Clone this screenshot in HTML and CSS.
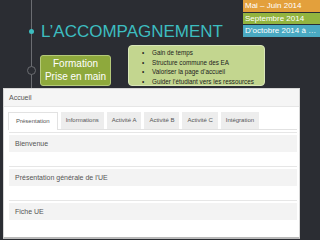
FILE: index.html
```html
<!DOCTYPE html>
<html>
<head>
<title>L'accompagnement</title>
<link rel="stylesheet" href="styles.css">
</head>
<body>

<div class="slide">
  <div class="row row-title">
    <div class="mark"><span class="dot"></span></div>
    <h1>L’ACCOMPAGNEMENT</h1>
    <div class="dates">
      <div class="date orange">Mai – Juin 2014</div>
      <div class="date green">Septembre 2014</div>
      <div class="date teal">D’octobre 2014 à …</div>
    </div>
  </div>

  <div class="row row-steps">
    <div class="mark"><span class="ring"></span></div>
    <div class="step">Formation<br>Prise en main</div>
    <ul class="goals">
      <li>Gain de temps</li>
      <li>Structure commune des EA</li>
      <li>Valoriser la page d’accueil</li>
      <li>Guider l’étudiant vers les ressources</li>
    </ul>
  </div>

  <div class="shot">
    <div class="shot-head">Accueil</div>
    <div class="tabs">
      <div class="tab active">Présentation</div>
      <div class="tab">Informations</div>
      <div class="tab">Activité A</div>
      <div class="tab">Activité B</div>
      <div class="tab">Activité C</div>
      <div class="tab">Intégration</div>
    </div>
    <div class="section"><h3>Bienvenue</h3></div>
    <div class="section"><h3>Présentation générale de l'UE</h3></div>
    <div class="section"><h3>Fiche UE</h3></div>
  </div>
</div>

</body>
</html>
```

FILE: styles.css
```css
body {
  margin: 0;
  background-color: #2b2d33;
  font-family: 'Liberation Sans', Arial, sans-serif;
  overflow: hidden;
}

.slide {
  width: 320px;
  height: 240px;
  /* the timeline rail */
  background: linear-gradient(#6b6d72, #6b6d72) no-repeat 31px 0 / 1px 88px;
}

.row {
  display: flex;
  align-items: flex-start;
}

.row-title {
  height: 45px;
}

.row-steps {
  height: 43px;
}

.mark {
  width: 41px;
  flex-shrink: 0;
}

.dot {
  display: block;
  width: 5px;
  height: 5px;
  margin: 29px 0 0 29px;
  border-radius: 50%;
  background-color: #3dbdc0;
}

.ring {
  display: block;
  width: 7px;
  height: 7px;
  margin: 21px 0 0 27px;
  border: 1px solid #6b6d72;
  border-radius: 50%;
  background-color: #2b2d33;
}

h1 {
  margin: 22px 0 0 0;
  font-size: 17px;
  line-height: 20px;
  font-weight: normal;
  color: #3dbdc0;
  white-space: nowrap;
}

.dates {
  margin-left: auto;
  width: 77px;
  display: flex;
  flex-direction: column;
  gap: 1px;
}

.date {
  height: 12px;
  line-height: 12px;
  padding-left: 2px;
  font-size: 8px;
  color: #fff;
  white-space: nowrap;
  overflow: hidden;
}

.orange { background-color: #e3a03c; }
.green { background-color: #92b43f; height: 11px; line-height: 11px; }
.teal { background-color: #4aa9c2; }

.step {
  width: 69px;
  height: 28px;
  margin-top: 10px;
  margin-left: -1px;
  padding-top: 1px;
  border: 1px solid #b5c97a;
  border-radius: 3px;
  background-color: #8ea93c;
  color: #fff;
  font-size: 10px;
  line-height: 13px;
  text-align: center;
}

.goals {
  width: 133px;
  height: 37px;
  margin: 0 0 0 17px;
  padding: 2px 0 0 2px;
  border: 1px solid #d9e6b8;
  border-radius: 4px;
  background-color: #c3d68f;
  list-style: none;
  font-size: 6.3px;
  line-height: 9.5px;
  color: #1c1c1c;
}

.goals li::before {
  content: '•';
  display: inline-block;
  width: 10px;
  margin-left: 11px;
}

.shot {
  margin-left: 3px;
  width: 295px;
  height: 148px;
  background-color: #fff;
  border: 1px solid #d6d6d6;
  border-bottom: 2px solid #b9b9b9;
  color: #555;
}

.shot-head {
  height: 17px;
  line-height: 18px;
  padding-left: 5px;
  background-color: #f5f5f5;
  border-bottom: 1px solid #e6e6e6;
  font-size: 7px;
}

.tabs {
  display: flex;
  gap: 3px;
  margin: 5px 2px 0 4px;
  border-bottom: 1px solid #e2e2e2;
}

.tab {
  height: 17px;
  line-height: 17px;
  padding: 0 5px;
  background-color: #ededed;
  font-size: 6px;
}

.tab.active {
  background-color: #fff;
  border: 1px solid #e2e2e2;
  border-bottom: none;
  padding: 0 7px;
  margin-bottom: -1px;
}

.section {
  height: 31px;
  margin: 2px 2px 0 5px;
  border-top: 1px solid #e6e6e6;
  padding-top: 2px;
}

.section + .section {
  margin-top: 0;
}

.section h3 {
  margin: 0;
  height: 17px;
  line-height: 17px;
  padding-left: 6px;
  background-color: #f3f3f3;
  font-size: 7px;
  font-weight: normal;
}
```
